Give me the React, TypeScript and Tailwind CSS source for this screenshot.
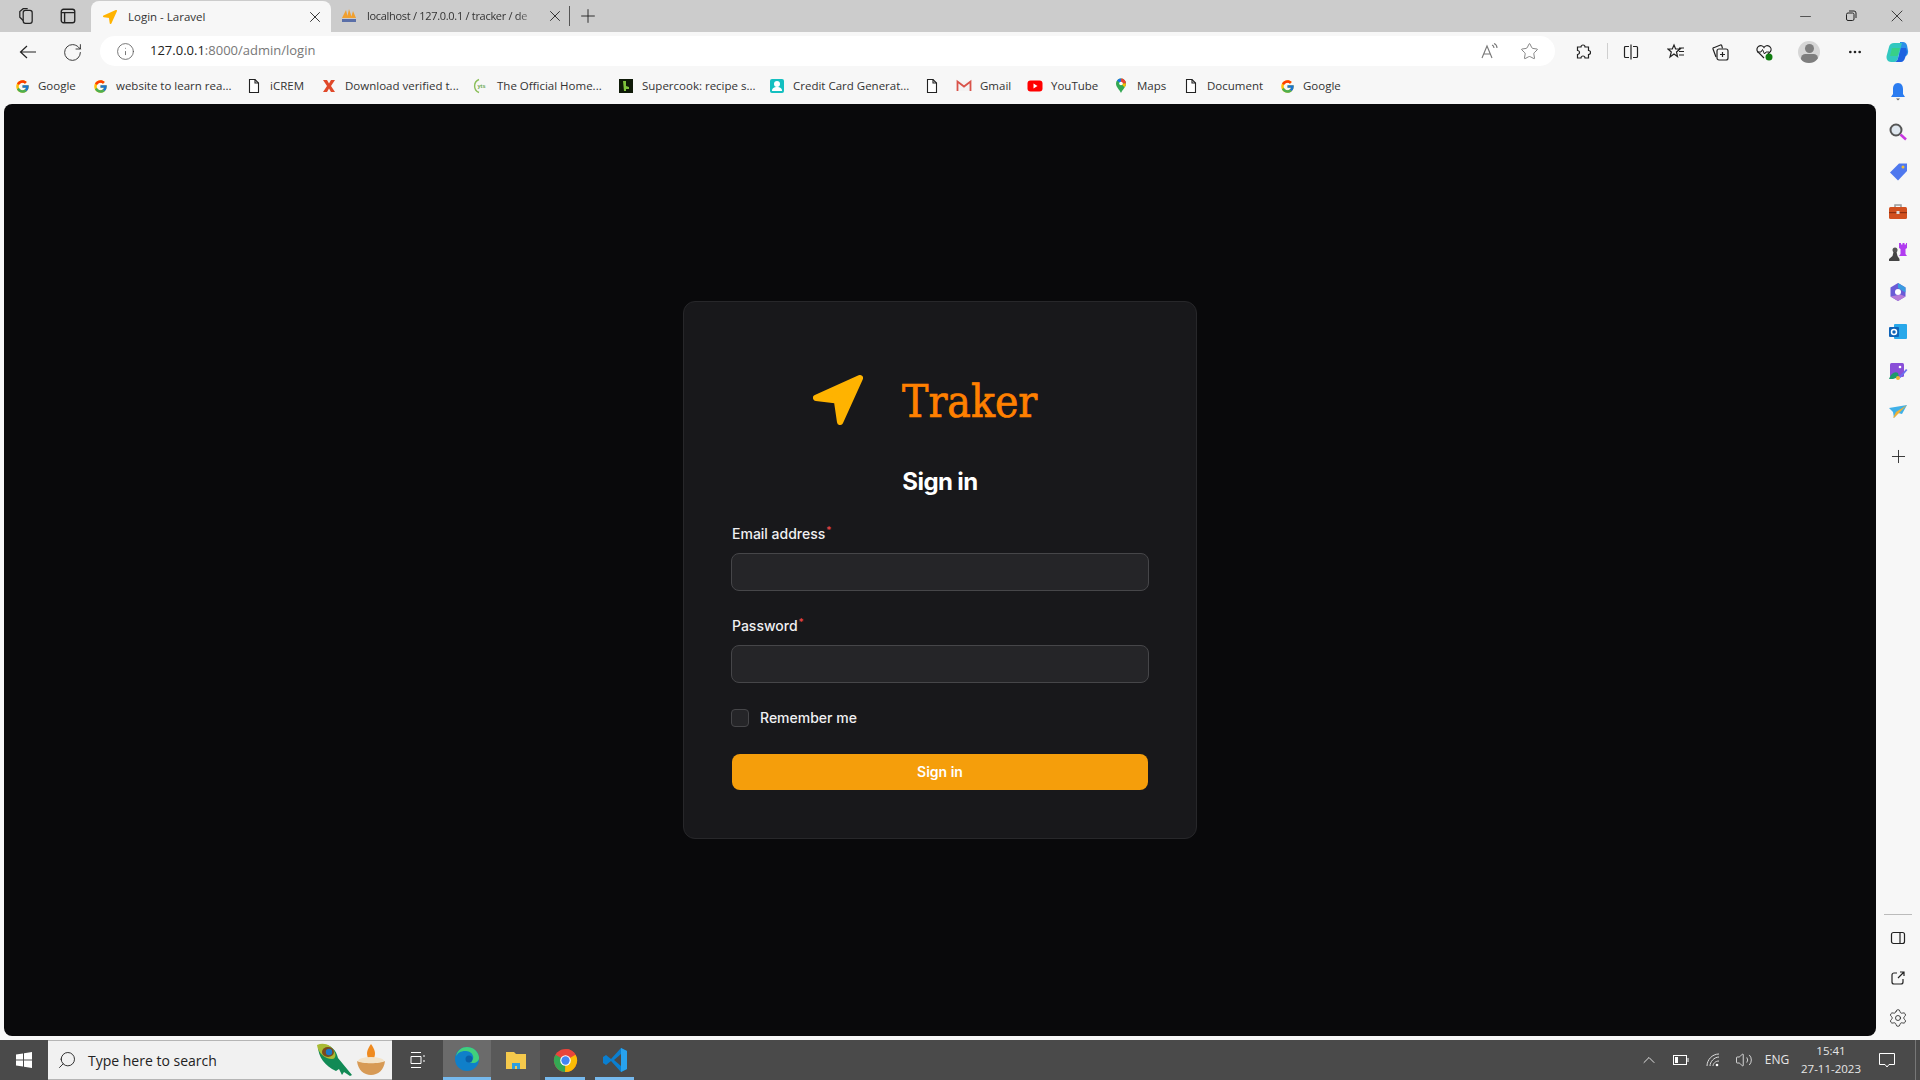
import React from 'react';
import { X, Plus, RotateCw, Info, Star, MoreHorizontal, Minus, Search, ChevronUp, Settings, Volume2 } from 'lucide-react';
import { FcGoogle } from 'react-icons/fc';

const File: React.FC = () => (
  <svg width="16" height="16" viewBox="0 0 16 16" fill="none" stroke="#222" strokeWidth="1.1">
    <path d="M3.5 1.5h5.5l3.5 3.5v9.5h-9z" fill="#fff" />
    <path d="M9 1.5v3.5h3.5" />
  </svg>
);

const Google: React.FC = () => <FcGoogle size={15} />;

const XMark: React.FC = () => (
  <svg width="16" height="16" viewBox="0 0 16 16">
    <path d="M2 2h4l2 3.5L10 2h4l-4 6 4 6h-4l-2-3.5L6 14H2l4-6z" fill="#e0492a" />
  </svg>
);

const Yts: React.FC = () => (
  <svg width="16" height="16" viewBox="0 0 16 16" fill="none">
    <path d="M6 1.500a7 7 0 0 0 0 13" stroke="#8bbf5a" strokeWidth="1.4" />
    <text x="4.500" y="10" fontSize="5.5" fontWeight="700" fill="#6aa84f" fontFamily="Liberation Sans">yts</text>
  </svg>
);

const Supercook: React.FC = () => (
  <svg width="16" height="16" viewBox="0 0 16 16">
    <rect x="1" y="1" width="14" height="14" fill="#0f1a08" />
    <path d="M5 3h3v5l3 1v2H8v2H6z" fill="#7ec13b" />
  </svg>
);

const Credit: React.FC = () => (
  <svg width="16" height="16" viewBox="0 0 16 16">
    <rect x="1" y="1" width="14" height="14" rx="2" fill="#14bfc0" />
    <circle cx="8" cy="6" r="3" fill="#fff" />
    <path d="M3 13c0-3 2-4 5-4s5 1 5 4z" fill="#fff" />
  </svg>
);

const Gmail: React.FC = () => (
  <svg width="16" height="16" viewBox="0 0 16 16">
    <path d="M1.5 3.5h13v9.500h-13z" fill="#f3f3f3" />
    <path d="M1.5 13V3.500l6.500 5 6.500-5V13" fill="none" stroke="#d9534a" strokeWidth="1.8" />
  </svg>
);

const YouTube: React.FC = () => (
  <svg width="16" height="16" viewBox="0 0 16 16">
    <rect x="0.500" y="2.500" width="15" height="11" rx="3" fill="#f00" />
    <path d="M6.500 5.500l4 2.500-4 2.500z" fill="#fff" />
  </svg>
);

const Maps: React.FC = () => (
  <svg width="16" height="16" viewBox="0 0 16 16">
    <path d="M8 15C6 11 3 9 3 5.500a5 5 0 0 1 10 0C13 9 10 11 8 15z" fill="#34a853" />
    <path d="M4 2.500A5 5 0 0 1 8 .5v5z" fill="#1a73e8" />
    <path d="M8 .5a5 5 0 0 1 5 5H8z" fill="#ea4335" />
    <path d="M13 5.500c0 1.500-.7 2.700-1.500 3.800L8 5.500z" fill="#fbbc04" />
    <circle cx="8" cy="5.500" r="1.800" fill="#fff" />
  </svg>
);

const Arrow: React.FC<{ size: number }> = ({ size }) => (
  <svg width={size} height={size} viewBox="1 1 48 48">
    <polygon points="46,4 4,23 24,25.500 27,46" fill="#ffb300" stroke="#ffb300" strokeWidth="6" strokeLinejoin="round" />
  </svg>
);

const bookmarks = [
  { label: 'Google', icon: Google, width: 'w-[38px]' },
  { label: 'website to learn rea...', icon: Google, width: 'w-[114px]' },
  { label: 'iCREM', icon: File, width: 'w-[35px]' },
  { label: 'Download verified t...', icon: XMark, width: 'w-[112px]' },
  { label: 'The Official Home...', icon: Yts, width: 'w-[105px]' },
  { label: 'Supercook: recipe s...', icon: Supercook, width: 'w-[111px]' },
  { label: 'Credit Card Generat...', icon: Credit, width: 'w-[115px]' },
  { label: '', icon: File, width: '' },
  { label: 'Gmail', icon: Gmail, width: 'w-[31px]' },
  { label: 'YouTube', icon: YouTube, width: 'w-[46px]' },
  { label: 'Maps', icon: Maps, width: 'w-[30px]' },
  { label: 'Document', icon: File, width: 'w-[56px]' },
  { label: 'Google', icon: Google, width: 'w-[38px]' },
];

const Bell = () => (
  <svg width="20" height="20" viewBox="0 0 20 20">
    <path d="M10 1c3.500 0 5 3 5 6v5l2 3H3l2-3V7c0-3 1.500-6 5-6z" fill="#2b7cf0" />
    <path d="M8 16.500h4l-2 2z" fill="#666" />
  </svg>
);
const Magnifier = () => (
  <svg width="20" height="20" viewBox="0 0 20 20">
    <circle cx="8" cy="8" r="5.500" fill="#dfe7ef" stroke="#555" strokeWidth="2" />
    <path d="M12.500 12.500l5.500 5" stroke="#c837e0" strokeWidth="2.500" />
  </svg>
);
const Tag = () => (
  <svg width="20" height="20" viewBox="0 0 20 20">
    <path d="M11 1.500h8v7.500l-9 9.500-8-8z" fill="#4f78ee" />
    <circle cx="15" cy="5" r="1.500" fill="#f3c033" />
  </svg>
);
const Toolbox = () => (
  <svg width="20" height="20" viewBox="0 0 20 20">
    <path d="M7 5V3h6v2" fill="none" stroke="#999" strokeWidth="1.500" />
    <rect x="1" y="5" width="18" height="12" rx="1.500" fill="#d1501f" />
    <rect x="1" y="10" width="18" height="1.200" fill="#8f2f10" />
    <rect x="8.500" y="9" width="3" height="3" fill="#ddd" />
  </svg>
);
const Chess = () => (
  <svg width="20" height="20" viewBox="0 0 20 20">
    <path d="M11 1h2v1.500h1.500V1h2v1.500H18V1h1v5l-1.500 1v5l1.500 2h-8l1.500-2V7L11 6z" fill="#b13cf0" />
    <circle cx="7" cy="8" r="2.500" fill="#555" />
    <path d="M5.500 10h3l1 4 2 3v2H1v-2l3.500-3z" fill="#444" />
  </svg>
);
const M365 = () => (
  <svg width="20" height="20" viewBox="0 0 20 20">
    <path d="M10 1l7.500 4.500v9L10 19l-7.500-4.500v-9z" fill="#6a5bd6" />
    <path d="M10 1l7.500 4.500v5L10 6z" fill="#3a9be0" />
    <path d="M2.500 14.500L10 19l7.500-4.500-5-2z" fill="#b67bd8" />
    <circle cx="10" cy="10" r="3" fill="#fff" />
  </svg>
);
const Outlook = () => (
  <svg width="20" height="20" viewBox="0 0 20 20">
    <rect x="6" y="2" width="13" height="15" rx="1" fill="#28a8ea" />
    <rect x="1" y="5" width="10" height="10" rx="1" fill="#0f64b8" />
    <circle cx="6" cy="10" r="2.500" fill="none" stroke="#fff" strokeWidth="1.500" />
  </svg>
);
const Designer = () => (
  <svg width="20" height="20" viewBox="0 0 20 20">
    <rect x="2" y="1" width="14" height="14" rx="1.500" fill="#8a4fd8" />
    <circle cx="12" cy="5" r="1.300" fill="#fff" />
    <path d="M1 17c2-6 6-8 9-6l1 4-6 2z" fill="#1d9a6c" />
    <path d="M11 15l7-8 1.500 1-7 8z" fill="#6a6ff0" />
    <circle cx="10" cy="16" r="2" fill="#f3b133" />
  </svg>
);
const Paper = () => (
  <svg width="20" height="20" viewBox="0 0 20 20">
    <path d="M1 6l18-3-5 9-4-1-4 5-1-6z" fill="#3fb0e8" />
    <path d="M19 3L8 10l-3 6 2-1z" fill="#f2b134" />
  </svg>
);
const sideApps = [Bell, Magnifier, Tag, Toolbox, Chess, M365, Outlook, Designer, Paper];

const Tray: React.FC<{ children: React.ReactNode; w: string; cls?: string }> = ({ children, w, cls }) => (
  <div className={`h-full flex items-center justify-center shrink-0 ${w} ${cls ?? ''}`}>{children}</div>
);

const Field: React.FC<{ label: string; type: string; top: string }> = ({ label, type, top }) => (
  <div className={top}>
    <label className="block text-sm leading-5 font-medium text-[#f0f0f2]">
      {label}
      <sup className="ml-px text-[10px] font-medium text-[#ef4444]">*</sup>
    </label>
    <input type={type} className="block -mx-px mt-[9px] h-[38px] w-[418px] rounded-lg border border-[#464649] bg-[#252528] outline-none" />
  </div>
);

export default function App() {
  return (
    <div className="flex h-screen w-screen flex-col overflow-hidden bg-[#f7f7f7] font-['Open_Sans',sans-serif] text-[#222]">
      {/* tab strip */}
      <div className="flex h-8 shrink-0 items-center bg-[#cccccc]">
        <div className="flex h-full w-[91px] shrink-0 items-center pl-[17px]">
          <svg width="18" height="18" viewBox="0 0 16 16" fill="none" stroke="#222" strokeWidth="1.100">
            <rect x="5.500" y="3" width="8" height="11.500" rx="2" />
            <path d="M5.500 12L2.500 9V4l3-2.500h4" />
          </svg>
          <svg className="ml-[24px]" width="18" height="18" viewBox="0 0 16 16" fill="none" stroke="#222" strokeWidth="1.200">
            <rect x="2" y="2" width="12" height="12" rx="2" />
            <path d="M2 5h12M5 5v9" />
          </svg>
        </div>
        <div className="mt-[2px] flex h-full w-[240px] shrink-0 items-center rounded-t-lg bg-[#f7f7f7] pl-[12px]">
          <Arrow size={14} />
          <span className="ml-[11px] w-[178px] text-[11.500px] whitespace-nowrap text-[#333]">Login - Laravel</span>
          <X size={18} strokeWidth={1.200} />
        </div>
        <div className="flex h-full w-[238px] shrink-0 items-center pl-[10px]">
          <svg width="16" height="16" viewBox="0 0 16 16">
            <path d="M1 10l4-8 2 8zM6 10l2-9 3 9zM10 10l2-7 3 7z" fill="#f0a030" />
            <rect x="1" y="11" width="14" height="3" fill="#5a6fa8" />
          </svg>
          <span className="ml-[10px] w-[171px] text-[11px] tracking-[-0.3px] whitespace-nowrap text-[#333] [mask-image:linear-gradient(to_right,black_88%,transparent)]">localhost / 127.0.0.1 / tracker / de</span>
          <X size={18} strokeWidth={1.200} className="ml-[8px]" />
        </div>
        <div className="h-[20px] w-px bg-[#555]" />
        <Plus size={22} strokeWidth={1} className="ml-[7px]" />
        <div className="ml-auto flex h-full">
          <Tray w="w-[46px]"><Minus size={17} strokeWidth={1} /></Tray>
          <Tray w="w-[46px]">
            <svg width="12" height="12" viewBox="0 0 12 12" fill="none" stroke="#222">
              <rect x="1.500" y="3" width="7.500" height="7.500" rx="1.500" />
              <path d="M4 1h5a2 2 0 0 1 2 2v5" />
            </svg>
          </Tray>
          <Tray w="w-[46px]"><X size={20} strokeWidth={1} /></Tray>
        </div>
      </div>

      {/* toolbar */}
      <div className="flex h-9 shrink-0 items-start pt-1">
        <Tray w="w-[44px] ml-[6px]" cls="h-[30px]">
          <svg width="18" height="18" viewBox="0 0 18 18" fill="none" stroke="#222" strokeWidth="1.200">
            <path d="M17 9H1.500M8 3L1.500 9 8 15" />
          </svg>
        </Tray>
        <Tray w="w-[44px]" cls="h-[30px]"><RotateCw size={21} strokeWidth={1} /></Tray>
        <div className="ml-[6px] flex h-[30px] w-[1455px] shrink-0 items-center rounded-full bg-white pl-[16px]">
          <Info size={19} strokeWidth={1} className="text-[#555]" />
          <span className="ml-[15px] w-[1331px] text-[13px] text-[#777]">
            <span className="text-[#222]">127.0.0.1</span>:8000/admin/login
          </span>
          <svg width="18" height="18" viewBox="0 0 18 18" fill="none" stroke="#777" strokeWidth="1.100">
            <path d="M1 16L6 4l5 12M3 12h6" />
            <path d="M11 3c1.500.5 2 1.500 2 3M13 1.500c2 .8 3 2.300 3 4.500" />
          </svg>
          <Star size={19} strokeWidth={1} className="ml-[21px] text-[#666]" />
        </div>
        <Tray w="w-[44px] ml-[6px]" cls="h-[30px]">
          <svg width="16" height="16" viewBox="0 0 16 16" fill="none" stroke="#222" strokeWidth="1.200">
            <path d="M6 3a2 2 0 0 1 4 0h3.500v3.500a2 2 0 0 1 0 4V14H10a2 2 0 0 0-4 0H2.500v-3.500a2 2 0 0 0 0-4V3z" />
          </svg>
        </Tray>
        <div className="mt-[7px] ml-[2px] h-[16px] w-px bg-[#cfcfcf]" />
        <Tray w="w-[46px]" cls="h-[30px]">
          <svg width="16" height="16" viewBox="0 0 16 16" fill="none" stroke="#222" strokeWidth="1.200">
            <path d="M6 2.500H2.500a1 1 0 0 0-1 1v9a1 1 0 0 0 1 1H6M10 2.500h3.500a1 1 0 0 1 1 1v9a1 1 0 0 1-1 1H10M8 .5v15" />
          </svg>
        </Tray>
        <Tray w="w-[44px]" cls="h-[30px]">
          <svg width="18" height="18" viewBox="0 0 18 18" fill="none" stroke="#222" strokeWidth="1.200">
            <path d="M7 2l1.600 4H13l-3.500 3 1 4.500L7 11l-4 3 1.300-5L1 6h4.300zM12 5h5M12 8.500h5M12 12h5" />
          </svg>
        </Tray>
        <Tray w="w-[44px]" cls="h-[30px]">
          <svg width="18" height="18" viewBox="0 0 18 18" fill="none" stroke="#222" strokeWidth="1.200">
            <path d="M5 14L2 6a1 1 0 0 1 .8-1.300L9.500 2a1 1 0 0 1 1.300.8l.7 2.500" />
            <rect x="6" y="6" width="11" height="11" rx="2" />
            <path d="M11.500 9v5M9 11.500h5" />
          </svg>
        </Tray>
        <Tray w="w-[44px]" cls="h-[30px]">
          <svg width="18" height="18" viewBox="0 0 18 18">
            <path d="M9 15L2.500 8.500a3.700 3.700 0 0 1 6.500-4 3.700 3.700 0 0 1 6.500 4L13 11" fill="none" stroke="#222" strokeWidth="1.200" />
            <path d="M2 9h4l1.500-2.500L9.500 11l1.500-2h3" fill="none" stroke="#222" strokeWidth="1" />
            <circle cx="14" cy="14" r="3.500" fill="#107c10" />
          </svg>
        </Tray>
        <Tray w="w-[46px]" cls="h-[30px]">
          <div className="flex h-[22px] w-[22px] flex-col items-center overflow-hidden rounded-full bg-[#d6d6d6] pt-[3px]">
            <div className="h-[9px] w-[9px] rounded-full bg-[#7e7e7e]" />
            <div className="mt-[1px] h-[10px] w-[17px] rounded-full bg-[#7e7e7e]" />
          </div>
        </Tray>
        <Tray w="w-[46px]" cls="h-[30px]"><MoreHorizontal size={16} strokeWidth={2} /></Tray>
        <Tray w="w-[38px]" cls="h-[30px]">
          <svg width="24" height="24" viewBox="0 0 24 24">
            <path d="M15 2h3c2 0 3.500 1.500 4 3.500l1 5c.5 3-1 6-4 6h-5z" fill="#2b8fe8" />
            <path d="M9 3h8l-4 15c-.6 2.500-2 4-4 4H6c-3 0-5-3-4.400-6L4 7c.6-2.500 2.500-4 5-4z" fill="#32c8c0" />
            <path d="M6 8h10l-3 10c-.5 2.500-2 4-4 4h7c2 0 3.500-2 4-4l2-6-1-4z" fill="#1d62e0" />
            <path d="M7 8h8l-2.500 8H5z" fill="#38d088" />
          </svg>
        </Tray>
      </div>

      <div className="flex min-h-0 flex-1">
        <div className="flex w-[1876px] shrink-0 flex-col">
          {/* bookmarks */}
          <div className="flex h-9 shrink-0 items-center gap-4 pl-[14px]">
            {bookmarks.map((b, i) => (
              <div key={i} className="flex items-center gap-2">
                <span className="flex h-4 w-4 items-center justify-center"><b.icon /></span>
                {b.label && <span className={`text-[11.5px] whitespace-nowrap text-[#333] ${b.width}`}>{b.label}</span>}
              </div>
            ))}
          </div>

          {/* page */}
          <main className="ml-1 flex h-[932px] w-[1872px] items-center justify-center rounded-lg bg-[#09090b] font-['Inter',sans-serif]">
            <div className="w-[514px] rounded-xl border border-[#27272a] bg-[#18181b] p-12">
              <div className="flex h-[100px] items-center pl-[81px]">
                <Arrow size={50} />
                <span className="mt-[4px] ml-[39px] font-['DejaVu_Serif_Condensed','DejaVu_Serif',serif] text-[44px] leading-none text-[#ff8000] [font-stretch:condensed] [-webkit-text-stroke:0.7px_#ff8000]">Traker</span>
              </div>
              <h1 className="mt-[16px] text-center text-2xl leading-8 font-bold tracking-tight text-white">Sign in</h1>
              <Field label="Email address" type="email" top="mt-[26px]" />
              <Field label="Password" type="password" top="mt-[25px]" />
              <label className="mt-[25px] flex items-center gap-[11px] text-sm leading-5 font-medium text-[#f0f0f2]">
                <input type="checkbox" className="-ml-px h-[18px] w-[18px] appearance-none rounded border border-[#464649] bg-[#252528]" />
                Remember me
              </label>
              <button className="mt-[26px] block h-9 w-[416px] rounded-lg bg-[#f59e0b] text-sm font-semibold text-white">Sign in</button>
            </div>
          </main>
        </div>

        {/* edge sidebar */}
        <aside className="flex w-11 shrink-0 flex-col items-center pt-[14px] pb-2">
          <div className="flex flex-col items-center gap-5">
            {sideApps.map((Icon, i) => <Icon key={i} />)}
          </div>
          <Plus size={21} strokeWidth={1} className="mt-[24px]" />
          <div className="mt-auto h-px w-[28px] bg-[#bbb]" />
          <svg className="mt-[15px]" width="16" height="16" viewBox="0 0 16 16" fill="none" stroke="#222" strokeWidth="1.200">
            <rect x="1.500" y="2.500" width="13" height="11" rx="2" />
            <path d="M10 2.500v11" />
          </svg>
          <svg className="mt-[24px]" width="16" height="16" viewBox="0 0 16 16" fill="none" stroke="#222" strokeWidth="1.200">
            <path d="M7 3H4a2 2 0 0 0-2 2v7a2 2 0 0 0 2 2h7a2 2 0 0 0 2-2V9M8 8l6-6M10 2h4v4" />
          </svg>
          <Settings size={20} strokeWidth={1} className="mt-[22px]" />
        </aside>
      </div>

      {/* taskbar */}
      <div className="mt-1 flex h-10 shrink-0 items-center bg-[#4a4a4a] text-white">
        <Tray w="w-[48px]">
          <svg width="16" height="16" viewBox="0 0 16 16" fill="#fff">
            <path d="M0 2.500L7 1.500V7.500H0zM8 1.300L16 0V7.500H8zM0 8.500H7V14.500L0 13.500zM8 8.500H16V16L8 14.700z" />
          </svg>
        </Tray>
        <div className="flex h-full w-[344px] shrink-0 items-center border-y border-[#b5b5b5] bg-[#f1f1f1] pl-[9px] font-['Open_Sans',sans-serif] text-[#222]">
          <Search size={20} strokeWidth={1.100} className="-scale-x-100" />
          <span className="ml-[11px] w-[228px] text-[14px]">Type here to search</span>
          <svg width="37" height="34" viewBox="0 0 37 34">
            <path d="M2 3c9-4 18 2 20 12l14 17-2 1-6-4-2 3-3-6-3 2C9 23 2 14 2 3z" fill="#118a55" />
            <path d="M1 2c7-3 15 0 18 8 1 3 0 6-3 6C9 16 2 10 1 2z" fill="#a9bb35" />
            <ellipse cx="12" cy="9" rx="6" ry="5" fill="#7a4a1e" />
            <circle cx="13" cy="9" r="3.200" fill="#1b78c8" />
          </svg>
          <svg className="ml-[2px]" width="32" height="34" viewBox="0 0 32 34">
            <path d="M16 1c4 6 5 9 3 14h-6c-2-5-1-8 3-14z" fill="#ef8a1f" />
            <ellipse cx="16" cy="18" rx="13" ry="4" fill="#f3e3c8" />
            <path d="M2 18c4 3 24 3 28 0-1 9-7 14-14 14S3 27 2 18z" fill="#d79a55" />
          </svg>
        </div>
        <Tray w="w-[51px]">
          <svg width="16" height="18" viewBox="0 0 16 18" fill="none" stroke="#fff">
            <path d="M1 1.500h10M1 16.500h10M1 12.500h10v-7H1zM14 4v2M14 9v2" />
          </svg>
        </Tray>
        <Tray w="w-[48px] border-b-[3px] border-[#76b9ed]" cls="bg-[#6b6b6b]">
          <svg width="26" height="26" viewBox="0 0 26 26">
            <circle cx="13" cy="13" r="12" fill="#0f7fc9" />
            <path d="M2 11C3 4 8 1 13 1c6 0 11 4 12 10 .5 4-3 6-6 6-2 0-4-1-4-2 3 0 5-2 4-5-1-4-5-5-8-5-4 0-8 2-9 6z" fill="#41d07c" />
            <circle cx="15" cy="13" r="3.500" fill="#0a5fa8" />
          </svg>
        </Tray>
        <Tray w="w-[49px]" cls="bg-[#595959]">
          <svg width="22" height="22" viewBox="0 0 22 22">
            <path d="M1 3h8l2 2h10v15H1z" fill="#f5c94c" />
            <path d="M7 20v-6h8v6h-3v-3h-2v3z" fill="#2f9fe0" />
          </svg>
        </Tray>
        <Tray w="w-[50px]" cls="relative">
          <svg width="25" height="25" viewBox="0 0 26 26">
            <circle cx="13" cy="13" r="12" fill="#e8453c" />
            <path d="M13 13L2.600 7A12 12 0 0 0 13 25z" fill="#34a853" />
            <path d="M13 13l-.5 12A12 12 0 0 0 23.400 7z" fill="#fbbc05" />
            <path d="M13 1a12 12 0 0 1 10.400 6H13z" fill="#e8453c" />
            <circle cx="13" cy="13" r="5.500" fill="#fff" />
            <circle cx="13" cy="13" r="4.300" fill="#4285f4" />
          </svg>
          <div className="absolute right-[5px] bottom-0 left-[5px] h-[3px] bg-[#76b9ed]" />
        </Tray>
        <Tray w="w-[49px]" cls="relative">
          <svg width="26" height="26" viewBox="0 0 26 26">
            <path d="M19 1l6 3v18l-6 3L9 14l-5 4-3-2v-6l3-2 5 4z" fill="#0a7fd0" />
            <path d="M19 7l-7 6 7 6z" fill="#4a4a4a" />
            <path d="M19 1l6 3v18l-6 3z" fill="#28a2ee" />
          </svg>
          <div className="absolute right-[5px] bottom-0 left-[5px] h-[3px] bg-[#76b9ed]" />
        </Tray>

        <div className="ml-auto flex h-full items-center">
          <Tray w="w-[32px]"><ChevronUp size={20} strokeWidth={1} /></Tray>
          <Tray w="w-[32px]">
            <svg width="16" height="10" viewBox="0 0 16 10" fill="none" stroke="#fff">
              <rect x=".5" y=".5" width="13" height="9" />
              <path d="M15 3v4" />
              <rect x="2" y="2" width="3" height="6" fill="#fff" stroke="none" />
            </svg>
          </Tray>
          <Tray w="w-[32px]">
            <svg width="14" height="14" viewBox="0 0 14 14" fill="none" stroke="#ddd">
              <path d="M1 13C1 7 6 1 13 1M4 13c0-4 4-9 9-9M7 13c0-2 2-5 6-5" />
              <circle cx="11" cy="12" r="1.300" fill="#fff" stroke="none" />
            </svg>
          </Tray>
          <Tray w="w-[30px]"><Volume2 size={18} strokeWidth={1} /></Tray>
          <Tray w="w-[36px]"><span className="text-xs text-[#e6e6e6]">ENG</span></Tray>
          <div className="flex w-[72px] flex-col items-center text-[11.500px] leading-[18px] text-[#e6e6e6]">
            <span>15:41</span>
            <span>27-11-2023</span>
          </div>
          <Tray w="w-[40px]">
            <svg width="16" height="16" viewBox="0 0 16 16" fill="none" stroke="#fff">
              <path d="M.5 1.500h15v11h-5.500L8 15l-2-2.500H.5z" />
            </svg>
          </Tray>
          <div className="mr-[4px] ml-[8px] h-full w-px bg-[#777]" />
        </div>
      </div>
    </div>
  );
}
